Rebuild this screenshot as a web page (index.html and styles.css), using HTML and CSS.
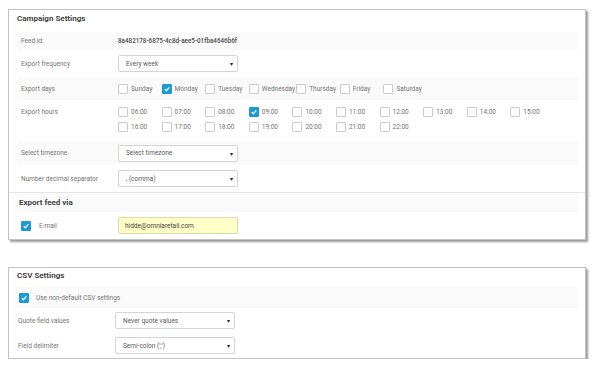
FILE: index.html
```html
<!DOCTYPE html>
<html lang="en">
<head>
  <meta charset="UTF-8">
  <meta name="viewport" content="width=device-width, initial-scale=1.0">
  <title>Campaign Settings</title>
  <link rel="stylesheet" href="styles.css">
</head>
<body>
  <div class="panel">
    <h2 class="panel-title">Campaign Settings</h2>
    <div class="rows">
      <div class="row stripe h18">
        <div class="label">Feed id:</div>
        <div class="feed-id">8a482178-6875-4c8d-aee5-01fba4646b6f</div>
      </div>
      <div class="row h27">
        <div class="label">Export frequency</div>
        <div class="select"><span>Every week</span><span class="caret">&#9662;</span></div>
      </div>
      <div class="row stripe h23">
        <div class="label">Export days</div>
        <div class="days">
          <label class="check"><span class="cb"></span>Sunday</label>
          <label class="check"><span class="cb on"><svg viewBox="0 0 10 10"><path d="M2.2 5.2 L4.2 7.2 L7.9 2.9"/></svg></span>Monday</label>
          <label class="check"><span class="cb"></span>Tuesday</label>
          <label class="check"><span class="cb"></span>Wednesday</label>
          <label class="check"><span class="cb"></span>Thursday</label>
          <label class="check"><span class="cb"></span>Friday</label>
          <label class="check"><span class="cb"></span>Saturday</label>
        </div>
      </div>
      <div class="row hours-row">
        <div class="label">Export hours</div>
        <div class="hours">
          <label class="check"><span class="cb"></span>06:00</label>
          <label class="check"><span class="cb"></span>07:00</label>
          <label class="check"><span class="cb"></span>08:00</label>
          <label class="check"><span class="cb on"><svg viewBox="0 0 10 10"><path d="M2.2 5.2 L4.2 7.2 L7.9 2.9"/></svg></span>09:00</label>
          <label class="check"><span class="cb"></span>10:00</label>
          <label class="check"><span class="cb"></span>11:00</label>
          <label class="check"><span class="cb"></span>12:00</label>
          <label class="check"><span class="cb"></span>13:00</label>
          <label class="check"><span class="cb"></span>14:00</label>
          <label class="check"><span class="cb"></span>15:00</label>
          <label class="check"><span class="cb"></span>16:00</label>
          <label class="check"><span class="cb"></span>17:00</label>
          <label class="check"><span class="cb"></span>18:00</label>
          <label class="check"><span class="cb"></span>19:00</label>
          <label class="check"><span class="cb"></span>20:00</label>
          <label class="check"><span class="cb"></span>21:00</label>
          <label class="check"><span class="cb"></span>22:00</label>
        </div>
      </div>
      <div class="row stripe h24">
        <div class="label">Select timezone</div>
        <div class="select"><span>Select timezone</span><span class="caret">&#9662;</span></div>
      </div>
      <div class="row h27">
        <div class="label">Number decimal separator</div>
        <div class="select"><span>, (comma)</span><span class="caret">&#9662;</span></div>
      </div>
    </div>
    <div class="divider"></div>
    <div class="rows">
      <div class="row stripe h19 section-head">Export feed via</div>
      <div class="row h27">
        <label class="label check"><span class="cb on"><svg viewBox="0 0 10 10"><path d="M2.2 5.2 L4.2 7.2 L7.9 2.9"/></svg></span>E-mail</label>
        <div class="select email">hidde@omniaretail.com</div>
      </div>
    </div>
  </div>

  <div class="panel panel-csv">
    <h2 class="panel-title">CSV Settings</h2>
    <div class="rows">
      <div class="row stripe h21">
        <label class="check wide"><span class="cb on"><svg viewBox="0 0 10 10"><path d="M2.2 5.2 L4.2 7.2 L7.9 2.9"/></svg></span>Use non-default CSV settings</label>
      </div>
      <div class="row h25">
        <div class="label">Quote field values</div>
        <div class="select"><span>Never quote values</span><span class="caret">&#9662;</span></div>
      </div>
      <div class="row h25">
        <div class="label">Field delimiter</div>
        <div class="select"><span>Semi-colon (';')</span><span class="caret">&#9662;</span></div>
      </div>
    </div>
  </div>
</body>
</html>
```

FILE: styles.css
```css
body {
  margin: 0;
  padding: 9px 0 0 8px;
  font-family: Roboto, "Noto Sans", sans-serif;
  font-size: 6.5px;
  color: #747474;
  background: #fff;
}
.panel {
  width: 576px;
  border: 1px solid #c2c2c2;
  background: #fff;
  box-shadow: 2px 2px 2px rgba(0, 0, 0, 0.4);
}
.panel + .panel {
  margin-top: 27px;
}
.panel-title {
  margin: 0;
  height: 22px;
  line-height: 18px;
  padding-left: 8px;
  font-size: 8px;
  font-weight: 700;
  color: #444;
}
.rows {
  margin: 0 7px 0 8px;
}
.row {
  display: flex;
  align-items: center;
}
.stripe {
  background: #fafafa;
}
.h18 { height: 18px; }
.h19 { height: 19px; }
.h21 { height: 21px; }
.h23 { height: 23px; }
.h24 { height: 24px; }
.h25 { height: 25px; }
.h27 { height: 27px; }
.label {
  width: 97px;
  padding-left: 4px;
  flex-shrink: 0;
}
.feed-id {
  color: #4a4a4a;
  font-weight: 500;
  font-size: 6.3px;
}
.select {
  box-sizing: border-box;
  width: 120px;
  height: 17px;
  border: 1px solid #d4d4d4;
  border-radius: 2px;
  padding: 0 4px 0 7px;
  display: flex;
  align-items: center;
  justify-content: space-between;
  color: #5a5a5a;
  background: #fff;
}
.caret {
  color: #222;
  font-size: 6px;
}
.select.email {
  background: #ffffc8;
  border-color: #dcdcae;
  color: #444;
  padding-left: 6px;
}
.check {
  display: flex;
  align-items: center;
  gap: 3px;
}
.cb {
  box-sizing: border-box;
  width: 10px;
  height: 10px;
  border: 1px solid #cccccc;
  border-radius: 1px;
  background: #fff;
  flex-shrink: 0;
  display: flex;
}
.cb.on {
  background: #1b9ad6;
  border-color: #1b9ad6;
}
.cb svg {
  width: 100%;
  height: 100%;
}
.cb path {
  fill: none;
  stroke: #fff;
  stroke-width: 1.5;
}
.days {
  display: flex;
  gap: 1px;
}
.days .check {
  min-width: 42.6px;
}
.hours-row {
  height: 41px;
  align-items: flex-start;
  padding-top: 7px;
  box-sizing: border-box;
}
.hours-row .label {
  line-height: 10px;
}
.hours {
  display: grid;
  grid-template-columns: repeat(10, 43.6px);
  row-gap: 5px;
}
.divider {
  border-top: 1px solid #e4e4e4;
}
.section-head {
  padding-left: 2px;
  font-size: 8px;
  font-weight: 700;
  color: #444;
}
.section-head,
.row .label.check {
  gap: 8px;
}
.row .label.check {
  width: 97px;
}
.panel-csv .panel-title {
  height: 19px;
  line-height: 16px;
}
.panel-csv .rows {
  margin-left: 7px;
}
.panel-csv .label {
  width: 97px;
  padding-left: 2px;
}
.check.wide {
  padding-left: 3px;
  gap: 7px;
}
```
